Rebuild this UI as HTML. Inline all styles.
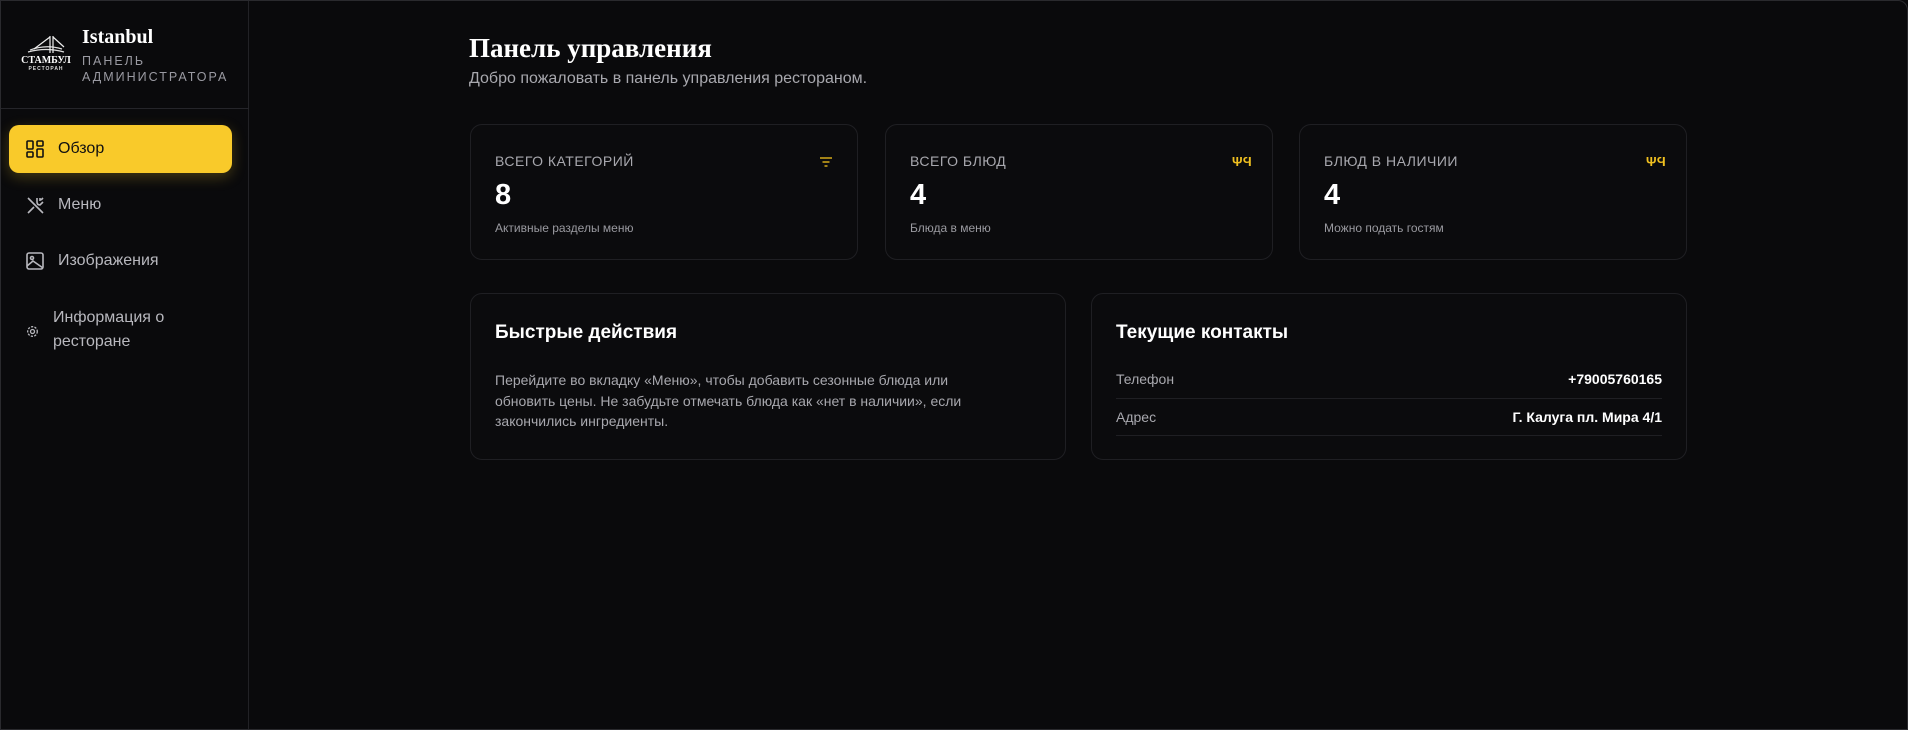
<!DOCTYPE html>
<html><head><meta charset="utf-8"><style>
*{margin:0;padding:0;box-sizing:border-box}
body{width:1908px;height:730px;background:#0a0a0c;font-family:"Liberation Sans",sans-serif;color:#fff;position:relative;overflow:hidden}
.frame{position:absolute;left:0;top:0;width:1908px;height:730px;border:1px solid #2a2a2e;border-radius:0 10px 0 0;pointer-events:none}
.side{position:absolute;left:0;top:0;width:249px;height:730px;border-right:1px solid #222226;background:#0a0a0c}
.hdiv{position:absolute;left:0;top:108px;width:249px;height:1px;background:#25252a}
.abs{position:absolute;white-space:nowrap}
.nav{position:absolute;left:9px;width:223px;height:48px;border-radius:10px;font-size:16px;color:#b8b8be;display:flex;align-items:center}
.act{background:#f9ca2a;color:#111;box-shadow:0 4px 14px rgba(249,202,42,.25)}
.card{position:absolute;border:1px solid #1f1f23;border-radius:12px;background:#0b0b0d}
.lbl{font-size:14px;letter-spacing:.5px;color:#a8a8ae}
.num{font-size:29px;font-weight:bold}
.sub{font-size:12px;color:#9a9aa0}
</style></head><body>
<div class="side">
 <svg class="abs" style="left:20px;top:33px" width="52" height="40" viewBox="0 0 52 40">
  <path d="M10 17 Q26 11 42 16 M8 19 Q26 14 44 19" stroke="#ddd" stroke-width="1.2" fill="none"/>
  <path d="M30 3 L30 20 M33 3 L33 20 M30 4 L14 16 M33 4 L44 14" stroke="#eee" stroke-width="1.2" fill="none"/>
  <text x="26" y="30" text-anchor="middle" font-family="Liberation Serif" font-weight="bold" font-size="10" fill="#fff">СТАМБУЛ</text>
  <text x="26" y="37" text-anchor="middle" font-size="5" font-weight="bold" fill="#ddd" letter-spacing="1">РЕСТОРАН</text>
 </svg>
 <div class="abs" style="left:82px;top:26px;font-family:'Liberation Serif',serif;font-weight:bold;font-size:20px">Istanbul</div>
 <div class="abs" style="left:82px;top:53px;font-size:12.5px;letter-spacing:2px;color:#9a9aa2;line-height:16px">ПАНЕЛЬ<br>АДМИНИСТРАТОРА</div>
 <div class="hdiv"></div>
 <div class="nav act" style="top:125px">
  <svg style="position:absolute;left:17px" width="18" height="18" viewBox="0 0 18 18" fill="none" stroke="#111" stroke-width="1.6"><rect x="1" y="1" width="6" height="8" rx="1"/><rect x="11" y="1" width="6" height="5" rx="1"/><rect x="1" y="12" width="6" height="5" rx="1"/><rect x="11" y="9" width="6" height="8" rx="1"/></svg>
  <span style="position:absolute;left:49px">Обзор</span></div>
 <div class="nav" style="top:181px">
  <svg style="position:absolute;left:17px" width="19" height="19" viewBox="0 0 19 19" fill="none" stroke="#b8b8be" stroke-width="1.6"><path d="M2 2 L17 17 M2 17 L8 11 M11 2 L11 6 Q11 9 14 9 L17 6 M14 2 L14 5 M17 2 L15 4"/></svg>
  <span style="position:absolute;left:49px">Меню</span></div>
 <div class="nav" style="top:237px">
  <svg style="position:absolute;left:17px" width="18" height="18" viewBox="0 0 18 18" fill="none" stroke="#b8b8be" stroke-width="1.6"><rect x="1" y="1" width="16" height="16" rx="2"/><circle cx="6" cy="6" r="1.5"/><path d="M1 14 L7 9 L17 16"/></svg>
  <span style="position:absolute;left:49px">Изображения</span></div>
 <div class="nav" style="top:303px;height:56px">
  <svg style="position:absolute;left:17px" width="13" height="13" viewBox="0 0 13 13" fill="none" stroke="#b8b8be" stroke-width="1.3"><circle cx="6.5" cy="6.5" r="2"/><circle cx="6.5" cy="6.5" r="4.8" stroke-dasharray="2.2 1.3"/></svg>
  <span style="position:absolute;left:44px;line-height:24px;top:3px">Информация о<br>ресторане</span></div>
</div>

<div class="abs" style="left:469px;top:33px;font-family:'Liberation Serif',serif;font-weight:bold;font-size:27px">Панель управления</div>
<div class="abs" style="left:469px;top:70px;font-size:16px;color:#a8a8ae">Добро пожаловать в панель управления рестораном.</div>

<div class="card" style="left:470px;top:124px;width:388px;height:136px">
 <div class="abs lbl" style="left:24px;top:28px">ВСЕГО КАТЕГОРИЙ</div>
 <svg class="abs" style="left:348px;top:32px" width="14" height="10" viewBox="0 0 14 10" stroke="#d4a91a" stroke-width="1.6"><path d="M1 1H13M3.5 5H10.5M5.5 9H8.5"/></svg>
 <div class="abs num" style="left:24px;top:54px">8</div>
 <div class="abs sub" style="left:24px;top:96px">Активные разделы меню</div>
</div>
<div class="card" style="left:885px;top:124px;width:388px;height:136px">
 <div class="abs lbl" style="left:24px;top:28px">ВСЕГО БЛЮД</div>
 <div class="abs" style="left:346px;top:29px;color:#f0c020;font-size:13px;font-weight:bold">ΨϤ</div>
 <div class="abs num" style="left:24px;top:54px">4</div>
 <div class="abs sub" style="left:24px;top:96px">Блюда в меню</div>
</div>
<div class="card" style="left:1299px;top:124px;width:388px;height:136px">
 <div class="abs lbl" style="left:24px;top:28px">БЛЮД В НАЛИЧИИ</div>
 <div class="abs" style="left:346px;top:29px;color:#f0c020;font-size:13px;font-weight:bold">ΨϤ</div>
 <div class="abs num" style="left:24px;top:54px">4</div>
 <div class="abs sub" style="left:24px;top:96px">Можно подать гостям</div>
</div>

<div class="card" style="left:470px;top:293px;width:596px;height:167px">
 <div class="abs" style="left:24px;top:28px;font-size:19px;font-weight:bold">Быстрые действия</div>
 <div class="abs" style="left:24px;top:76px;font-size:14px;line-height:20.5px;color:#a8a8ae;white-space:normal;width:505px">Перейдите во вкладку «Меню», чтобы добавить сезонные блюда или обновить цены. Не забудьте отмечать блюда как «нет в наличии», если закончились ингредиенты.</div>
</div>
<div class="card" style="left:1091px;top:293px;width:596px;height:167px">
 <div class="abs" style="left:24px;top:28px;font-size:19px;font-weight:bold">Текущие контакты</div>
 <div class="abs" style="left:24px;top:77px;font-size:14px;color:#a8a8ae">Телефон</div>
 <div class="abs" style="right:24px;top:77px;font-size:14px;font-weight:bold">+79005760165</div>
 <div class="abs" style="left:24px;right:24px;top:104px;height:1px;background:#1f1f23"></div>
 <div class="abs" style="left:24px;top:115px;font-size:14px;color:#a8a8ae">Адрес</div>
 <div class="abs" style="right:24px;top:115px;font-size:14px;font-weight:bold">Г. Калуга пл. Мира 4/1</div>
 <div class="abs" style="left:24px;right:24px;top:141px;height:1px;background:#1f1f23"></div>
</div>
<div class="frame"></div>
</body></html>
